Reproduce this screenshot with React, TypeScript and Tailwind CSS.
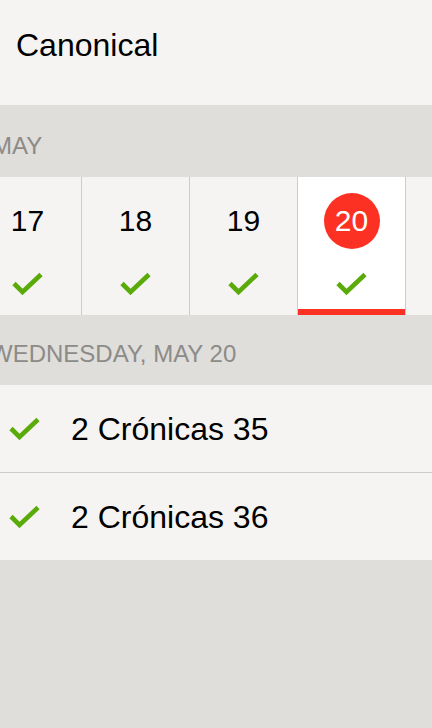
const days = [
  { n: 17, selected: false },
  { n: 18, selected: false },
  { n: 19, selected: false },
  { n: 20, selected: true },
  { n: 21, selected: false },
];

const readings = ["2 Crónicas 35", "2 Crónicas 36"];

function Check({ className = "" }: { className?: string }) {
  return (
    <svg
      viewBox="0 0 31 23"
      className={className}
      fill="none"
      stroke="#5aab0a"
      strokeWidth={4.6}
      strokeLinecap="butt"
      strokeLinejoin="miter"
    >
      <polyline points="2,11.5 10.5,20 29,2.5" />
    </svg>
  );
}

export default function App() {
  return (
    <div
      className="flex min-h-[728px] flex-col overflow-hidden bg-[#dfdedb] text-black"
      style={{ fontFamily: '"Liberation Sans", Arial, sans-serif' }}
    >
      <div className="h-[105px] bg-[#f5f4f2] pl-4 pt-[29px]">
        <h1 className="text-[32px] leading-none">Canonical</h1>
      </div>

      <div className="h-[72px] pt-[29px]">
        <p className="-ml-[8px] text-[24px] leading-none text-[#8c8b88]">MAY</p>
      </div>

      <div className="-ml-[26px] flex h-[138px]">
        {days.map((d) => (
          <div
            key={d.n}
            className={
              d.selected
                ? "relative flex w-[108px] shrink-0 flex-col items-center border-r border-[#cdcccb] bg-white pt-4"
                : "relative flex w-[108px] shrink-0 flex-col items-center border-r border-[#cdcccb] bg-[#f5f4f2] pt-4"
            }
          >
            <div
              className={
                d.selected
                  ? "flex h-14 w-14 items-center justify-center rounded-full bg-[#fc3123] text-[30px] leading-none text-white"
                  : "flex h-14 w-14 items-center justify-center text-[30px] leading-none"
              }
            >
              {d.n}
            </div>
            <Check className="mt-[23px] h-[23px] w-[31px]" />
            {d.selected && (
              <div className="absolute inset-x-0 bottom-0 h-[6px] bg-[#fc3123]" />
            )}
          </div>
        ))}
      </div>

      <div className="h-[70px] pt-[27px]">
        <p className="-ml-[10px] whitespace-nowrap text-[24px] leading-none text-[#8c8b88]">
          WEDNESDAY, MAY 20
        </p>
      </div>

      <ul className="bg-[#f5f4f2]">
        {readings.map((r, i) => (
          <li
            key={r}
            className={
              i === 0
                ? "flex h-[88px] items-center border-b border-[#cdcccb] pl-[9px]"
                : "flex h-[87px] items-center pl-[9px]"
            }
          >
            <Check className="h-[23px] w-[31px]" />
            <span className="ml-[31px] text-[32px] leading-none">{r}</span>
          </li>
        ))}
      </ul>
    </div>
  );
}
